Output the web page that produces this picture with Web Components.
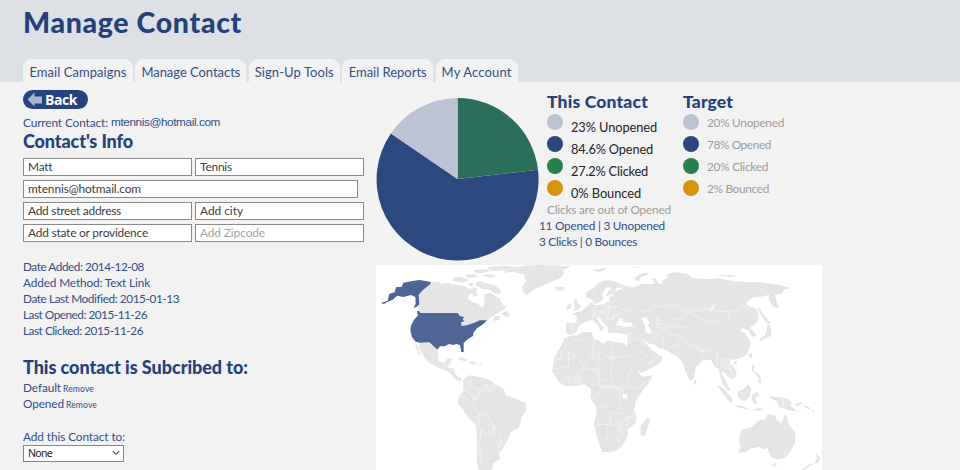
<!DOCTYPE html>
<html lang="en"><head><meta charset="utf-8"><title>Manage Contact</title>
<style>
html,body{margin:0;height:470px;overflow:hidden;background:#f2f2f2;font-family:Lato,"Open Sans",sans-serif;color:#344e86}
</style></head><body>
<contact-page></contact-page>
<script>
const define=(name,html,init)=>customElements.define(name,class extends HTMLElement{
  connectedCallback(){ if(this.shadowRoot)return; this.attachShadow({mode:'open'}).innerHTML=typeof html==='function'?html(this):html; if(init)init(this); }
});

/* Text line whose tracking is adjusted to fill the width given by "w". */
define('fit-text','<style>:host{display:inline-block;white-space:nowrap}span{display:inline-block}</style><span><slot></slot></span>',el=>{
  const s=el.shadowRoot.querySelector('span'),w=+el.getAttribute('w');
  const natural=s.getBoundingClientRect().width;
  s.style.letterSpacing=((w-natural)/el.textContent.length)+'px';
  el.style.width=w+'px';
});

define('tab-item',`<style>:host{display:flex;justify-content:center;align-items:center;box-sizing:border-box;height:23px;background:#f2f2f2;border-radius:9px 9px 0 0;font-size:13px;padding-top:3px;color:#344e86}</style><slot></slot>`);

define('page-header',`<style>
:host{display:flex;flex-direction:column;justify-content:space-between;height:82px;box-sizing:border-box;background:#dde0e5;padding:4px 0 0 23px}
h1{margin:0;font-size:28.5px;line-height:36px;font-weight:900;color:#25417d}
nav{display:grid;grid-template-columns:110px 111px 91px 91px 82px;gap:2.4px}
</style><h1><fit-text w="219">Manage Contact</fit-text></h1>
<nav><tab-item><fit-text w="97">Email Campaigns</fit-text></tab-item><tab-item><fit-text w="99">Manage Contacts</fit-text></tab-item><tab-item><fit-text w="79">Sign-Up Tools</fit-text></tab-item><tab-item><fit-text w="78">Email Reports</fit-text></tab-item><tab-item><fit-text w="70">My Account</fit-text></tab-item></nav>`);

define('back-button',`<style>
:host{display:flex;align-items:center;width:65px;height:19px;background:#25447f;border-radius:10px;color:#fff;font:bold 14px/19px "Open Sans",sans-serif;box-sizing:border-box;padding-left:4px;gap:2px}
svg{display:block}fit-text{margin-top:-1px}</style><svg width="16" height="15" viewBox="0 0 16 15"><path d="M.5 7.5 7.5 .5v4H15v7H7.500v3z" fill="#aab6d0"/></svg><fit-text w="32"><slot></slot>Back</fit-text>`);

define('text-field',`<style>:host{display:flex;align-items:center;box-sizing:border-box;height:18px;border:1px solid #8a8a8a;background:#fff;padding-left:4px;color:#3c3c3c;font-size:11.9px}
:host([wide]){grid-column:1/3;width:335px}:host([faint]){color:#a5a5a5}</style><slot></slot>`);

define('select-box',`<style>:host{display:flex;align-items:center;justify-content:space-between;box-sizing:border-box;width:101px;height:17px;border:1px solid #858585;background:#fff;padding:0 3px 0 4px;color:#222;font:10.6px "Noto Sans",sans-serif}</style><slot></slot><svg width="8" height="6" viewBox="0 0 8 6"><path d="M.8 1 4 4.300 7.200 1" fill="none" stroke="#555" stroke-width="1.1"/></svg>`);

define('contact-panel',`<style>
:host{display:block;width:342px;padding:8px 0 0 23px;font-size:11.8px;line-height:16px}
h2{margin:0;font-size:18px;line-height:22px;font-weight:900;color:#25417d}
.current{display:flex;gap:3px;margin-top:5px;height:16px;line-height:17px}
.current .mail{font-family:"Liberation Sans",sans-serif}
.fields{display:grid;grid-template-columns:169px 169px;gap:4px 3px;margin-top:6px}
.facts,.list{display:flex;flex-direction:column}
.facts{margin-top:17px}.list{margin-top:1px}
.sub{margin-top:17px}
.row{display:flex;align-items:baseline;gap:2px;line-height:17px;height:16.4px}.row small{font-size:8.6px}
.add{margin-top:17px}
</style>
<back-button></back-button>
<div class="current"><fit-text w="85">Current Contact:</fit-text><fit-text class="mail" w="109">mtennis@hotmail.com</fit-text></div>
<h2><fit-text w="110">Contact's Info</fit-text></h2>
<div class="fields"><text-field><fit-text w="24">Matt</fit-text></text-field><text-field><fit-text w="32">Tennis</fit-text></text-field><text-field wide><fit-text w="113">mtennis@hotmail.com</fit-text></text-field><text-field><fit-text w="93">Add street address</fit-text></text-field><text-field><fit-text w="43">Add city</fit-text></text-field><text-field><fit-text w="120">Add state or providence</fit-text></text-field><text-field faint><fit-text w="65">Add Zipcode</fit-text></text-field></div>
<div class="facts"><fit-text w="121">Date Added: 2014-12-08</fit-text><fit-text w="127">Added Method: Text Link</fit-text><fit-text w="156">Date Last Modified: 2015-01-13</fit-text><fit-text w="124">Last Opened: 2015-11-26</fit-text><fit-text w="120">Last Clicked: 2015-11-26</fit-text></div>
<h2 class="sub"><fit-text w="225">This contact is Subcribed to:</fit-text></h2>
<div class="list"><div class="row"><fit-text w="38">Default</fit-text><small><fit-text w="31">Remove</fit-text></small></div><div class="row"><fit-text w="41">Opened</fit-text><small><fit-text w="31">Remove</fit-text></small></div></div>
<div class="add"><fit-text w="102">Add this Contact to:</fit-text></div>
<select-box><fit-text w="24">None</fit-text></select-box>`);

define('pie-chart',`<style>:host,svg{display:block;width:164px;height:164px}</style><svg viewBox="0 0 164 164"><path d="M81.500 82 162 72.800A81 81 0 1 1 14.900 36.500z" fill="#2b487f"/><path d="M81.500 82V1A81 81 0 0 1 162 72.800z" fill="#2b6e5b"/><path d="M81.500 82V1A81 81 0 0 0 14.900 36.500z" fill="#bbc3d4"/></svg>`);

define('legend-item',el=>`<style>:host{display:flex;height:22px;gap:8px;font-size:12.8px;line-height:20px;color:#252525}
i{flex:none;width:16px;height:16px;border-radius:50%;background:${el.getAttribute('color')}}
span{padding-top:3px}:host([faint]){color:#9c9c9c;font-size:11.8px}:host([faint]) span{padding:0;line-height:17px}</style><i></i><span><slot></slot></span>`);

define('legend-panel',`<style>:host{display:grid;grid-template-columns:136px 1fr;font-size:11.8px}
h2{margin:0;font-size:17.5px;line-height:22px;font-weight:900;color:#25417d}.items{padding-top:1px}
.note{color:#9c9c9c;line-height:16px;height:16px}.counts{margin-left:-8px;display:flex;flex-direction:column;line-height:16px}</style>
<div><h2><fit-text w="101">This Contact</fit-text></h2><div class="items">
<legend-item color="#bbc3d4"><fit-text w="86">23% Unopened</fit-text></legend-item><legend-item color="#29467f"><fit-text w="82">84.6% Opened</fit-text></legend-item><legend-item color="#29804c"><fit-text w="77">27.2% Clicked</fit-text></legend-item><legend-item color="#d7950e"><fit-text w="70">0% Bounced</fit-text></legend-item></div>
<div class="note"><fit-text w="124">Clicks are out of Opened</fit-text></div><div class="counts"><fit-text w="126">11 Opened | 3 Unopened</fit-text><fit-text w="98">3 Clicks | 0 Bounces</fit-text></div></div>
<div><h2><fit-text w="50">Target</fit-text></h2><div class="items"><legend-item faint color="#bbc3d4"><fit-text w="77">20% Unopened</fit-text></legend-item><legend-item faint color="#29467f"><fit-text w="64">78% Opened</fit-text></legend-item><legend-item faint color="#29804c"><fit-text w="61">20% Clicked</fit-text></legend-item><legend-item faint color="#d7950e"><fit-text w="62">2% Bounced</fit-text></legend-item></div></div>`);

define('world-map',`<style>:host,svg{display:block;width:446px;height:205px}:host{background:#fff}
.land{fill:#e5e5e5}.border{fill:none;stroke:#f4f4f4;stroke-width:2.2;stroke-linejoin:round}.water{fill:#fff}.us{fill:#4e6695}</style>
<svg viewBox="0 3 446 205">
<g transform="scale(.33333)">
 <g class="land">
 <path d="M163 62 185 60 205 68 235 66 250 74 262 70 282 82 292 76 305 79 302 90 280 97 276 110 287 119 306 125 318 138 325 125 326 97 345 92 358 102 372 112 377 124 390 135 386 142 370 150 347 165 335 175 310 176 300 182 275 190 258 188 262 170 245 154 130 154 126 140 130 125 128 98 140 85z"/>
 <path d="M375 155 392 146 403 161 389 165zM355 162 375 163 368 175 350 176zM198 66 212 62 240 68 233 76 205 74zM230 48 250 44 283 54 260 62 230 57zM265 38 295 35 307 44 280 49zM294 25 325 20 345 26 320 34 300 33zM330 15 380 11 420 13 390 24 350 28zM315 39 345 36 362 42 340 48zM300 62 315 57 332 64 355 69 372 82 375 92 361 97 343 84 320 80 299 70zM240 70 257 70 251 79zM275 64 286 62 294 70 284 74zM287 89 300 87 306 100 292 106zM385 27 400 22 405 29 389 34z"/>
 <path d="M130 241 160 243 172 252 184 263 188 278 186 292 192 300 205 303 212 291 228 287 225 301 214 315 235 320 238 335 250 347 258 347 254 357 240 355 230 341 214 327 190 319 160 304 145 285 128 258zM116 242 122 244 134 283 126 276zM243 290 258 286 278 295 266 298zM277 300 292 297 304 306 286 308zM309 305 319 306 316 310 308 309z"/>
 <path d="M262 352 280 340 295 343 322 347 345 356 355 365 374 374 383 382 390 400 413 407 432 417 450 424 450 441 438 457 434 483 427 499 405 510 398 529 380 560 368 573 372 591 351 604 348 624 308 624 302 590 304 540 300 490 280 470 245 421 250 401 262 388z"/>
 </g>
 <path class="border" d="M262 386 285 395 293 412 308 400 307 380 285 377 279 352M307 380 325 390 329 366 340 386 355 386 353 365M371 385 375 377M250 402 268 406 280 419 299 420M308 400 291 426 300 446 309 453 308 482 302 492M310 453 337 464 354 493 351 508 331 512 315 508 309 493M351 508 365 518 374 534 371 562M315 508 311 540 314 600M354 493 368 513 379 516M356 537 370 549 364 570M210 303 205 315M221 322 232 329"/>
 <g class="us"><path d="M15 123 35 116 40 95 56 91 60 76 77 74 82 62 105 58 130 54 163 59 164 65 140 85 128 98 130 127 122 135 113 137 119 125 118 105 105 99 82 105 64 101 50 113 32 121 24 126z"/><path d="M123 147H129L134 154 128 159 124 156z"/><path d="M130 153H245L252 162 264 165 260 173 266 177 256 181 256 191 273 190 299 181 311 175H333L325 184 303 199 292 212 291 222 276 231 263 243 263 270 256 270 252 249 241 246 232 249 219 246 206 253 192 253 184 263 172 252 160 241 132 242 119 239 108 226 103 205 105 191 114 173 124 163z"/></g>
</g>
<g transform="translate(144) scale(.33333)">
 <g class="land">
 <path d="M-36 21 -8 14 25 10 70 9 125 11 150 12 143 19 130 25 131 36 122 47 102 56 86 63 60 74 39 84 20 101 8 90 7 73 18 57 10 37-12 31-35 29zM105 76 122 74 137 78 125 88 108 84zM-15 420 0 418 16 430 19 443 5 465 0 480-15 485z"/>
 <path d="M218 22 260 19 250 27 233 31zM345 46 363 35 383 32 383 39 365 42 355 58 346 54zM332 17 355 15 360 18zM160 113 170 111 172 122 183 132 178 142 157 148 165 138zM142 129 154 124 154 139 140 143z"/>
 <path d="M198 106 200 90 220 79 232 64 258 55 283 58 312 69 310 77 288 77 287 89 306 80 315 71 340 76 363 67 405 65 396 51 407 48 414 63 426 68 429 55 450 44 470 36V265H450L420 260 405 249 385 244 368 231 376 244 400 267 429 287 420 304 389 321 363 334 350 317 318 260 323 243 322 218 290 213 264 212 262 194 246 179 242 169 228 166 240 184 254 198 242 210 237 194 218 173 206 177 190 182 172 197 170 211 151 219 137 211 140 181 169 183 171 164 158 154 183 148 206 130 213 119 225 130 250 127 268 119 268 105 285 99 275 97 256 104 263 90 275 77 262 75 250 88 247 99 250 108 240 121 224 125 215 111z"/>
 <path d="M150 221 171 220 187 211 215 211 222 230 238 236 249 246 263 235 279 239 313 243 333 286 353 317 357 336 369 344 397 340 387 363 368 385 347 416 342 445 349 460 348 482 323 501 323 524 304 554 282 569 257 570 247 570 232 530 222 487 230 448 228 432 211 408 213 382 195 367 163 373 139 373 119 363 97 326 103 287 123 253 133 230z"/>
 <path d="M384 462 390 477 373 525 361 517 362 492z"/>
 </g>
 <g class="water"><path d="M288 190 298 169 306 171 311 180 333 181 339 193 319 195 301 191zM363 168 379 166 389 182 384 191 396 211 388 217 375 209 375 192zM410 165 415 170 412 181zM309 398 323 396 320 410 309 411z"/></g>
 <path class="border" d="M132 256 154 240 189 230 186 215M145 270 145 313 104 321M145 270 190 303 216 289 221 231M104 290H122L126 262M190 303 188 332 166 343 162 364M190 317 232 324 237 288 216 289M278 240 276 291 234 269M276 291 272 348 238 361 237 324M276 285 330 283M272 348 282 374 303 380 330 375 319 356 338 313M330 375 356 379 373 360 388 355M282 374 251 376 237 362M214 372 233 365 242 376 231 408 219 409M242 376 269 375 301 382 299 430 310 452 284 456 264 445 253 434 229 432M272 447 270 487 228 488M270 487 302 485 321 465 349 461M321 465 322 491 308 486 298 500 276 515 262 531 248 532M262 531 261 496M298 500 309 520 294 528 300 544M310 383 306 408 335 417M106 334 133 332 139 342 134 356M140 343 151 347 149 371M173 343 174 368M179 343 184 368M231 64 217 102M262 73 274 77M205 130 226 153 217 168M225 130 226 145 255 151 261 130M226 153 217 161 236 162 244 154 266 157 267 134 300 136M266 157 262 174 280 171 278 157M280 163 292 163 298 142 327 146 338 159M155 180 157 214M170 182 187 185M286 198 342 192 349 206M322 217 337 215 352 226 373 249M326 229 353 234M363 314 395 303 405 276M364 267 376 281 389 281M365 150 386 147 405 135 450 129 470 136M373 213 406 208 430 230 431 266M430 230 470 216M410 195 446 208M404 184 431 189 453 199"/>
</g>
<g transform="translate(294) scale(.33333)">
 <g class="land">
 <path d="M-8 35 15 31 55 36 65 47 105 51 148 49 188 57 230 60 275 61 317 67 360 77 355 82 341 82 338 93 315 98 320 116 326 140 311 136 297 114 297 99 270 105 247 107 231 119 233 130 259 140 267 158 263 178 248 193 239 196 247 204 258 218 252 226 241 219 235 205 216 199 211 207 224 212 238 234 241 254 231 278 213 289 201 292 184 294 179 300 199 326 199 341 187 353 171 341 159 326 155 338 166 352 176 376 182 388 172 385 160 368 151 346 147 321 134 313 122 293 99 294 76 318 72 347 61 357 47 330 38 301 18 281-8 267z"/>
 <path d="M139 39 175 38 200 41 193 44 157 43zM260 137 271 140 279 155 288 166 302 182 297 187 286 178 275 161zM301 190 304 216 301 223 282 231 274 238 269 231 285 220 291 202 291 188zM237 275 246 273 246 290 236 284zM190 298 202 298 199 309 191 306zM74 350 80 359 77 369 72 363zM142 370 160 379 187 409 188 425 169 410zM188 430 214 431 232 438 241 443 211 438zM203 389 222 380 234 367 244 380 238 406 223 418 205 409zM246 305 254 312 251 327 270 339 275 364 264 364 265 346 246 326zM247 396 262 390 268 401 254 408 263 423 250 425 246 411zM300 402 314 405 331 406 352 411 366 420 363 432 380 447 363 446 345 440 327 437 321 418 305 412zM250 442 268 439 282 441 264 447zM374 428 394 419 398 424 382 433zM401 429 415 434 423 440 415 442 400 433zM426 440 433 447 426 448z"/>
 <path d="M211 510 223 501 247 494 261 480 276 470 283 475 293 457 315 460 320 474 334 486 346 454 352 474 360 492 370 505 377 520 375 544 358 574 344 588 324 592 304 587 299 574 294 567 292 557 281 562 268 555 244 559 227 570 204 572 211 558 207 536zM308 605 322 602 318 611 309 616zM439 574 447 586 453 588 444 603 430 605 440 592zM423 604 430 607 407 620 386 628 404 616z"/>
 </g>
 <path class="border" d="M-8 130 21 133 41 149 70 144 91 149 103 140 127 146 177 150 185 145 198 151 205 134 223 130 247 155M51 149 75 161 117 176 148 181 179 165 177 150M-8 167 35 173 48 152M-8 198 22 193 48 198M-8 220 28 218 44 229 54 246 80 258 98 268 123 266 132 257 142 275 151 289 165 294 182 292M29 219 15 252-6 259M68 247 96 259 96 278 116 288M142 275 139 310M151 298 163 319 186 319M164 295 175 312 186 332M247 193 239 207M205 391 222 396 236 386M340 410 341 440"/>
 <path class="water" d="M120 140 128 135 130 124 133 126 132 139 122 144z"/>
</g></svg>`);

define('report-panel',`<style>:host{display:block;width:446px}.top{display:grid;grid-template-columns:171px 1fr;height:168px}pie-chart{margin-top:0}legend-panel{margin-top:-6px}</style><div class="top"><pie-chart></pie-chart><legend-panel></legend-panel></div><world-map></world-map>`);

define('contact-page',`<style>:host{display:block;width:960px;height:470px;background:#f2f2f2}main{display:grid;grid-template-columns:376px 446px}report-panel{padding-top:15px}</style><page-header></page-header><main><contact-panel></contact-panel><report-panel></report-panel></main>`);
</script></body></html>
